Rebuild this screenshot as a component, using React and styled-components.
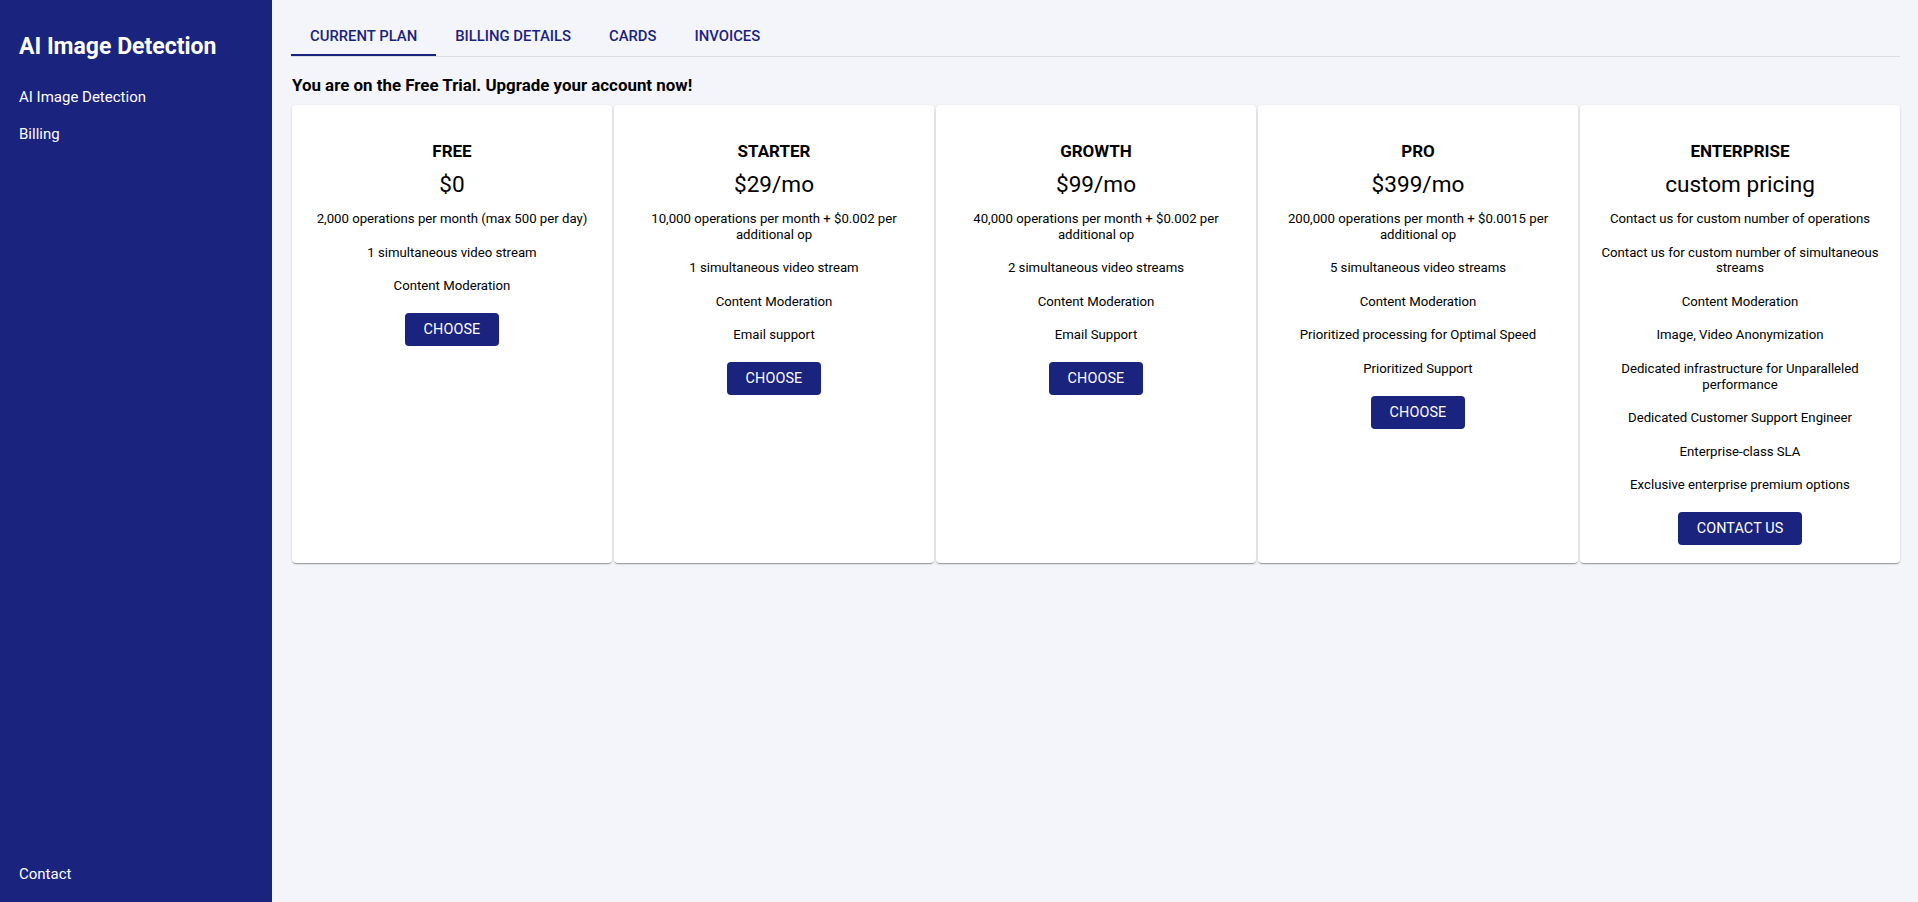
import styled, { createGlobalStyle } from "styled-components";

const GlobalStyle = createGlobalStyle`
  body {
    margin: 0;
    font-family: Roboto, "Liberation Sans", Arial, sans-serif;
    background: #f4f5fa;
  }
`;

const plans = [
  {
    name: "FREE",
    price: "$0",
    features: [
      "2,000 operations per month (max 500 per day)",
      "1 simultaneous video stream",
      "Content Moderation",
    ],
    action: "CHOOSE",
  },
  {
    name: "STARTER",
    price: "$29/mo",
    features: [
      "10,000 operations per month + $0.002 per additional op",
      "1 simultaneous video stream",
      "Content Moderation",
      "Email support",
    ],
    action: "CHOOSE",
  },
  {
    name: "GROWTH",
    price: "$99/mo",
    features: [
      "40,000 operations per month + $0.002 per additional op",
      "2 simultaneous video streams",
      "Content Moderation",
      "Email Support",
    ],
    action: "CHOOSE",
  },
  {
    name: "PRO",
    price: "$399/mo",
    features: [
      "200,000 operations per month + $0.0015 per additional op",
      "5 simultaneous video streams",
      "Content Moderation",
      "Prioritized processing for Optimal Speed",
      "Prioritized Support",
    ],
    action: "CHOOSE",
  },
  {
    name: "ENTERPRISE",
    price: "custom pricing",
    features: [
      "Contact us for custom number of operations",
      "Contact us for custom number of simultaneous streams",
      "Content Moderation",
      "Image, Video Anonymization",
      "Dedicated infrastructure for Unparalleled performance",
      "Dedicated Customer Support Engineer",
      "Enterprise-class SLA",
      "Exclusive enterprise premium options",
    ],
    action: "CONTACT US",
  },
];

const tabs = ["CURRENT PLAN", "BILLING DETAILS", "CARDS", "INVOICES"];

const Layout = styled.div`
  display: flex;
  min-height: 100vh;
`;

// sidebar
const Sidebar = styled.aside`
  width: 272px;
  flex-shrink: 0;
  background: #1a237e;
  color: #fff;
  display: flex;
  flex-direction: column;
  padding: 33px 19px 8px;
  box-sizing: border-box;
`;

const Brand = styled.div`
  font-size: 23px;
  font-weight: 700;
  line-height: 27px;
  margin-bottom: 18.5px;
`;

const NavItem = styled.div`
  font-size: 15px;
  line-height: 17.6px;
  padding: 10px 0;
  margin-top: ${(p) => (p.$bottom ? "auto" : "0")};
  cursor: pointer;
`;

// main area
const Main = styled.main`
  flex: 1;
  padding: 16px 18px 18px 19px;
  min-width: 0;
`;

const TabBar = styled.div`
  display: flex;
  border-bottom: 1px solid #dcdde3;
`;

const Tab = styled.div`
  height: 40px;
  box-sizing: border-box;
  padding: 2px 19px 0;
  display: flex;
  align-items: center;
  font-size: 14.85px;
  font-weight: 500;
  color: #1a237e;
  border-bottom: 2px solid ${(p) => (p.$active ? "#1a237e" : "transparent")};
  cursor: pointer;
`;

const Notice = styled.div`
  font-size: 16.9px;
  font-weight: 700;
  line-height: 19px;
  color: #000;
  margin: 19px 0 10px 1px;
`;

const PlanGrid = styled.div`
  display: grid;
  grid-template-columns: repeat(5, 1fr);
  gap: 2px;
  margin-left: 1px;
`;

const Card = styled.div`
  background: #fff;
  border-radius: 4px;
  box-shadow: 0 2px 1px -1px rgba(0, 0, 0, 0.2), 0 1px 1px 0 rgba(0, 0, 0, 0.14),
    0 1px 3px 0 rgba(0, 0, 0, 0.12);
  padding: 36px 16px 18px;
  display: flex;
  flex-direction: column;
  align-items: center;
  text-align: center;
  color: #000;
`;

const PlanName = styled.div`
  font-size: 17px;
  font-weight: 700;
  line-height: 20px;
  margin-bottom: 10.5px;
`;

const Price = styled.div`
  font-size: 22.6px;
  line-height: 26.5px;
  margin-bottom: 13px;
`;

const FeatureList = styled.div`
  display: flex;
  flex-direction: column;
  align-items: center;
  gap: 18px;
`;

const Feature = styled.div`
  font-size: 13.2px;
  line-height: 15.6px;
`;

const Button = styled.button`
  height: 33px;
  margin-top: 1px;
  padding: 0 19px;
  border: none;
  border-radius: 4px;
  background: #1a237e;
  color: #fff;
  font-family: inherit;
  font-size: 14.4px;
  font-weight: 400;
  letter-spacing: 0.1px;
  cursor: pointer;
`;

const PlanCard = ({ name, price, features, action }) => (
  <Card>
    <PlanName>{name}</PlanName>
    <Price>{price}</Price>
    <FeatureList>
      {features.map((f) => (
        <Feature key={f}>{f}</Feature>
      ))}
      <Button>{action}</Button>
    </FeatureList>
  </Card>
);

const App = () => {
  return (
    <Layout>
      <GlobalStyle />
      <Sidebar>
        <Brand>AI Image Detection</Brand>
        <NavItem>AI Image Detection</NavItem>
        <NavItem>Billing</NavItem>
        <NavItem $bottom>Contact</NavItem>
      </Sidebar>
      <Main>
        <TabBar>
          {tabs.map((t, i) => (
            <Tab key={t} $active={i === 0}>
              {t}
            </Tab>
          ))}
        </TabBar>
        <Notice>You are on the Free Trial. Upgrade your account now!</Notice>
        <PlanGrid>
          {plans.map((p) => (
            <PlanCard key={p.name} {...p} />
          ))}
        </PlanGrid>
      </Main>
    </Layout>
  );
};

export default App;
